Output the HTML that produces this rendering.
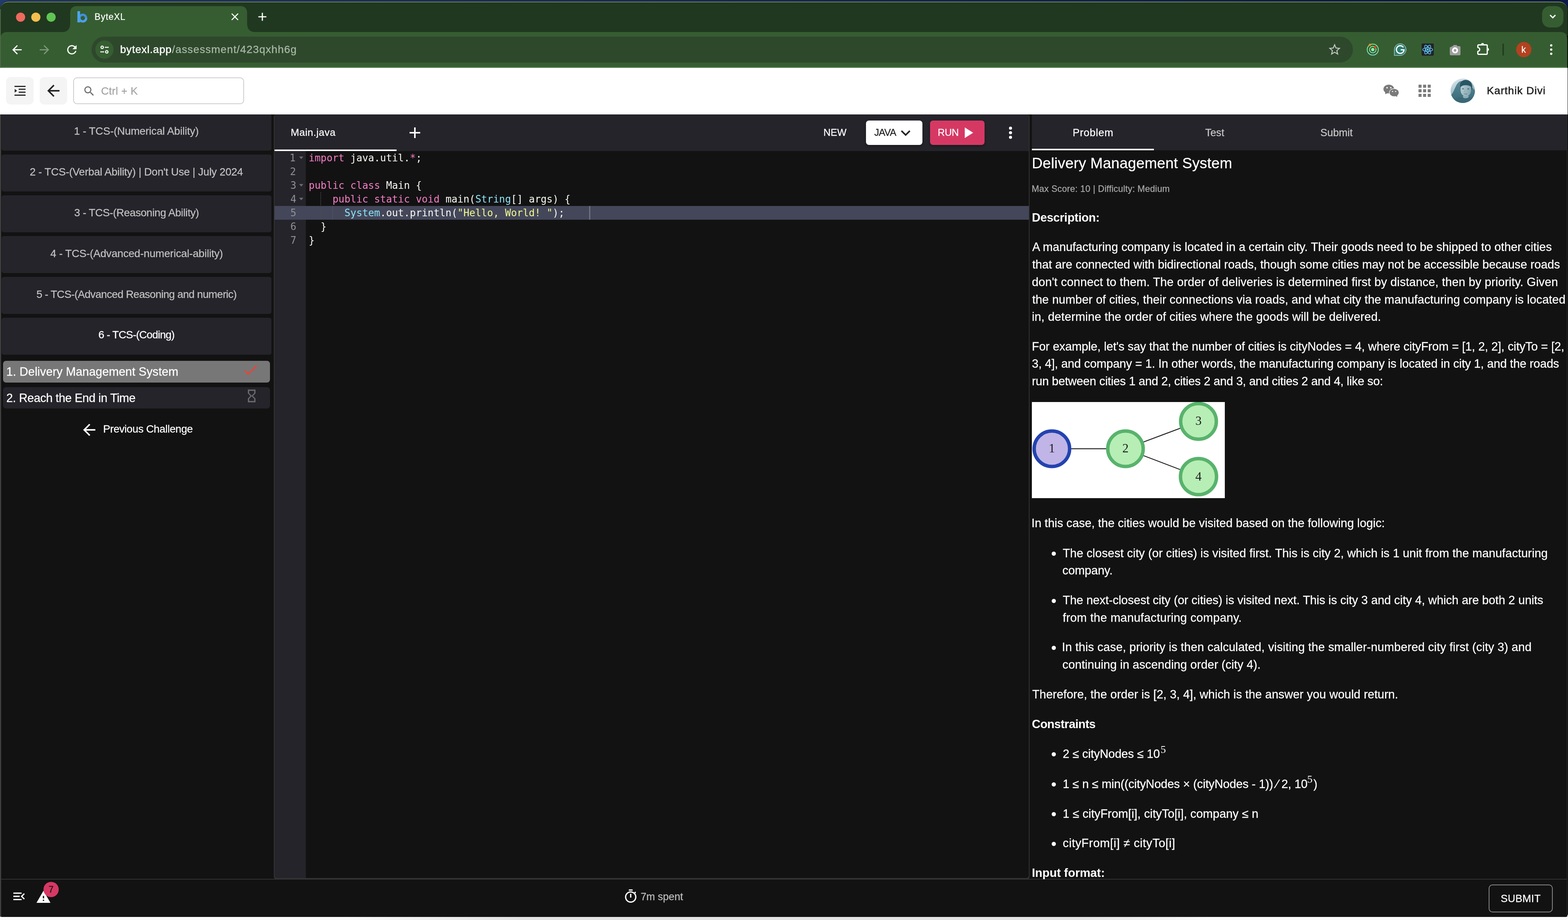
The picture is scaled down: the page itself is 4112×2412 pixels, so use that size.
<!DOCTYPE html>
<html lang="en"><head><meta charset="utf-8"><title>ByteXL</title>
<style>
html,body{margin:0;padding:0;}
body{width:4112px;height:2412px;overflow:hidden;position:relative;background:#111;font-family:'Liberation Sans', sans-serif;}
#root{position:absolute;left:0;top:0;width:4112px;height:2412px;overflow:hidden;will-change:transform;}
#root div,#root svg,#root span.t{position:absolute;display:block;}
span.t{white-space:pre;line-height:100px;-webkit-text-stroke:0.3px currentColor;}
@media (min-resolution:1.5dppx){body{width:2056px;height:1206px;}#root{transform:scale(.5);transform-origin:0 0;}}
</style></head><body><div id="root">
<div style="left:0px;top:0px;width:4112px;height:30px;background:linear-gradient(90deg,#223b6d 0%,#1a2f63 40%,#0d1a4a 100%);"></div>
<div style="left:0px;top:2398px;width:4112px;height:14px;background:linear-gradient(90deg,#fafafa 0%,#fafafa 22%,#e4e4e4 33%,#e4e4e4 69%,#fafafa 77%,#fafafa 100%);"></div>
<div style="left:0;top:3px;width:4111px;height:2401px;border-radius:22px 22px 6px 6px;background:#000;overflow:hidden;" id="win">
<div style="left:0px;top:0px;width:4111px;height:90px;background:#20381f;border-top:2px solid #7d9479;border-radius:22px 22px 0 0;box-sizing:border-box;margin-top:1px;"></div>
</div>
<svg style="left:0px;top:0px;" width="4112" height="180" viewBox="0 0 4112 180"><path d="M1 178 L1 102 Q1 84 19 84 L163 84 Q184 84 184 61 L184 34 Q184 16 202 16 L630 16 Q648 16 648 34 L648 61 Q648 84 669 84 L4092 84 Q4110 84 4110 102 L4110 178 Z" fill="#365d31"/></svg>
<div style="left:1px;top:175px;width:4109px;height:3px;background:linear-gradient(#3d6438,#6b8b67);"></div>
<div style="left:0px;top:24px;width:2px;height:154px;background:#4f684c;"></div>
<div style="left:42px;top:33px;width:24px;height:24px;background:#ee6a5e;border-radius:50%;"></div>
<div style="left:82px;top:33px;width:24px;height:24px;background:#f5bf4f;border-radius:50%;"></div>
<div style="left:122px;top:33px;width:24px;height:24px;background:#61c554;border-radius:50%;"></div>
<svg style="left:200px;top:28px;" width="32" height="32" viewBox="0 0 32 32"><circle cx="17.1" cy="19.4" r="8.800" fill="none" stroke="#3f8fdd" stroke-width="5.800"/><rect x="3" y="1.2" width="7" height="29.600" rx="0.800" fill="#4ea4ef"/><circle cx="17.1" cy="19.4" r="8.800" fill="none" stroke="#4a9fec" stroke-width="5.800" stroke-dasharray="44 100" stroke-dashoffset="16"/></svg>
<svg style="left:600.0px;top:28.0px;" width="32" height="32" viewBox="0 0 24 24"><path d="M19 6.41L17.59 5 12 10.59 6.41 5 5 6.41 10.59 12 5 17.59 6.41 19 12 13.41 17.59 19 19 17.59 13.41 12z" fill="#fff"/></svg>
<svg style="left:670.0px;top:26.0px;" width="36" height="36" viewBox="0 0 24 24"><path d="M19 13h-6v6h-2v-6H5v-2h6V5h2v6h6v2z" fill="#fff"/></svg>
<div style="left:4044px;top:16px;width:56px;height:56px;background:#365d31;border-radius:20px;"></div>
<svg style="left:4058px;top:30px;" width="28" height="28" viewBox="0 0 28 28"><path d="M7 9.5l7 7 7-7" stroke="#fff" stroke-width="3.2" fill="none"/></svg>
<svg style="left:25.5px;top:111.5px;" width="37" height="37" viewBox="0 0 24 24"><path d="M20 11H7.83l5.59-5.59L12 4l-8 8 8 8 1.41-1.41L7.83 13H20v-2z" fill="#fff"/></svg>
<svg style="left:97.5px;top:111.5px;" width="37" height="37" viewBox="0 0 24 24"><path d="M12 4l-1.41 1.41L16.17 11H4v2h12.17l-5.58 5.59L12 20l8-8z" fill="#7d977a"/></svg>
<svg style="left:169.5px;top:111.5px;" width="37" height="37" viewBox="0 0 24 24"><path d="M17.65 6.35C16.2 4.9 14.21 4 12 4c-4.42 0-7.99 3.58-7.99 8s3.57 8 7.99 8c3.73 0 6.84-2.55 7.73-6h-2.08c-.82 2.33-3.04 4-5.65 4-3.31 0-6-2.69-6-6s2.69-6 6-6c1.66 0 3.14.69 4.22 1.78L13 11h7V4l-2.35 2.35z" fill="#fff"/></svg>
<div style="left:240px;top:96px;width:3308px;height:68px;background:#2e482c;border-radius:34px;"></div>
<div style="left:250px;top:106px;width:48px;height:48px;background:#365d31;border-radius:50%;"></div>
<svg style="left:258px;top:114px;" width="32" height="32" viewBox="0 0 32 32"><g fill="none" stroke="#fff" stroke-width="2.6"><circle cx="10" cy="10" r="3.2"/><path d="M17 10h10M5 22h10"/><circle cx="22" cy="22" r="3.2"/></g></svg>
<svg style="left:3481.0px;top:111.0px;" width="38" height="38" viewBox="0 0 24 24"><path d="M22 9.24l-7.19-.62L12 2 9.19 8.63 2 9.24l5.46 4.73L5.82 21 12 17.27 18.18 21l-1.63-7.03L22 9.24zM12 15.4l-3.76 2.27 1-4.28-3.32-2.88 4.38-.38L12 6.1l1.71 4.04 4.38.38-3.32 2.88 1 4.28L12 15.4z" fill="#c3c6c3"/></svg>
<svg style="left:3584px;top:114px;" width="32" height="32" viewBox="0 0 32 32"><defs><linearGradient id="g1" x1="0" y1="0" x2="0" y2="1"><stop offset="0" stop-color="#8cf28c"/><stop offset="1" stop-color="#7fe9d3"/></linearGradient></defs><circle cx="16" cy="16" r="14.6" fill="none" stroke="url(#g1)" stroke-width="2"/><circle cx="16" cy="16" r="8.6" fill="none" stroke="url(#g1)" stroke-width="2"/><circle cx="16" cy="16" r="4.4" fill="#8df0a4"/><circle cx="8.6" cy="3.4" r="3" fill="#ee8a3a"/><circle cx="22.6" cy="10" r="3" fill="#e5492d"/></svg>
<svg style="left:3656px;top:114px;" width="32" height="32" viewBox="0 0 32 32"><path d="M16 .5A15.5 15.5 0 1 1 16 31.5H.5V16A15.5 15.5 0 0 1 16 .5z" fill="#2f7f6f" stroke="#e8f0ec" stroke-width="1"/><path d="M24.2 10.2A10 10 0 1 0 26 16.6H17.4" fill="none" stroke="#fff" stroke-width="3.2"/></svg>
<svg style="left:3728px;top:114px;" width="32" height="32" viewBox="0 0 32 32"><rect width="32" height="32" rx="3" fill="#20232a"/><g fill="none" stroke="#61c7f5" stroke-width="1.7"><ellipse cx="16" cy="16" rx="13" ry="5"/><ellipse cx="16" cy="16" rx="13" ry="5" transform="rotate(60 16 16)"/><ellipse cx="16" cy="16" rx="13" ry="5" transform="rotate(120 16 16)"/></g><circle cx="16" cy="16" r="2.7" fill="#61c7f5"/></svg>
<svg style="left:3801px;top:116.5px;" width="30" height="28" viewBox="0 0 30 28"><path d="M4 6h2V4h3l2-3h8l2 3h5a3 3 0 0 1 3 3v18a3 3 0 0 1-3 3H4a3 3 0 0 1-3-3V9a3 3 0 0 1 3-3z" fill="#9e9f9e"/><circle cx="14.800" cy="15" r="7.900" fill="#fff"/><circle cx="14.800" cy="15" r="3.500" fill="#9e9f9e"/></svg>
<svg style="left:3872px;top:110px;" width="36" height="36" viewBox="0 0 36 36"><path d="M3.500 14.600V9.700a2 2 0 0 1 2-2H26.200a2 2 0 0 1 2 2V30.300a2 2 0 0 1-2 2H5.500a2 2 0 0 1-2-2V24.600a5 5 0 0 0 0-10z" fill="none" stroke="#fff" stroke-width="3.200" stroke-linejoin="round"/><path d="M11.700 7a4.200 4.200 0 0 1 8.400 0zM28.600 15.400a4.200 4.200 0 0 1 0 8.400z" fill="#fff"/></svg>
<div style="left:3940px;top:114px;width:4px;height:32px;background:#223d21;border-radius:2px;"></div>
<div style="left:3976px;top:110px;width:40px;height:40px;background:#b3421f;border-radius:50%;"></div>
<div style="left:4065px;top:116px;width:6px;height:6px;background:#fff;border-radius:50%;"></div>
<div style="left:4065px;top:127px;width:6px;height:6px;background:#fff;border-radius:50%;"></div>
<div style="left:4065px;top:138px;width:6px;height:6px;background:#fff;border-radius:50%;"></div>
<div style="left:0px;top:178px;width:4111px;height:122px;background:#fff;"></div>
<div style="left:0px;top:300px;width:4111px;height:2104px;background:#121212;border-radius:0 0 6px 6px;"></div>
<div style="left:0px;top:300px;width:3px;height:2104px;background:#3f3f3f;border-radius:0 0 0 6px;"></div>
<div style="left:4109px;top:300px;width:1px;height:2104px;background:#2e2e2e;"></div>
<div style="left:16px;top:202px;width:72px;height:72px;background:#f4f4f4;border-radius:12px;"></div>
<div style="left:104px;top:202px;width:72px;height:72px;background:#f4f4f4;border-radius:12px;"></div>
<svg style="left:37.5px;top:225px;" width="29" height="26" viewBox="0 0 29 26"><path d="M0 0h29v3H0zM11 7.600h18v3H11zM11 15.200h18v3H11zM0 23h29v3H0zM0.500 8.200l6.300 4.800-6.300 4.800z" fill="#222"/></svg>
<svg style="left:116.0px;top:214.0px;" width="48" height="48" viewBox="0 0 24 24"><path d="M20 11H7.83l5.59-5.59L12 4l-8 8 8 8 1.41-1.41L7.83 13H20v-2z" fill="#222"/></svg>
<div style="left:192px;top:203px;width:448px;height:70px;background:#fff;border:2px solid #ccc;border-radius:10px;box-sizing:border-box;"></div>
<svg style="left:217.0px;top:222.0px;" width="34" height="34" viewBox="0 0 24 24"><path d="M15.5 14h-.79l-.28-.27C15.41 12.59 16 11.11 16 9.5 16 5.91 13.09 3 9.5 3S3 5.91 3 9.5 5.91 16 9.5 16c1.61 0 3.09-.59 4.23-1.57l.27.28v.79l5 4.99L20.49 19l-4.99-5zm-6 0C7.01 14 5 11.99 5 9.5S7.01 5 9.5 5 14 7.01 14 9.5 11.99 14 9.5 14z" fill="#6c6c6c"/></svg>
<svg style="left:3628px;top:222px;" width="41" height="33" viewBox="0 0 41 33"><g fill="#7a7a7a"><ellipse cx="14" cy="11.400" rx="14" ry="11.400"/><path d="M4 18.500L5.200 25.200 12 21z"/></g><ellipse cx="28.100" cy="20.700" rx="13.300" ry="11" fill="#fff"/><g fill="#7a7a7a"><ellipse cx="28.100" cy="20.700" rx="12" ry="9.800"/><path d="M31 29.500L36 32 36.500 26z"/></g><g fill="#fff"><circle cx="9.500" cy="8" r="1.900"/><circle cx="19.300" cy="8" r="1.900"/><circle cx="23.900" cy="17.800" r="1.600"/><circle cx="32" cy="17.800" r="1.600"/></g></svg>
<div style="left:3720px;top:222px;width:8px;height:8px;background:#7c7c7c;"></div>
<div style="left:3732px;top:222px;width:8px;height:8px;background:#7c7c7c;"></div>
<div style="left:3744px;top:222px;width:8px;height:8px;background:#7c7c7c;"></div>
<div style="left:3720px;top:234px;width:8px;height:8px;background:#7c7c7c;"></div>
<div style="left:3732px;top:234px;width:8px;height:8px;background:#7c7c7c;"></div>
<div style="left:3744px;top:234px;width:8px;height:8px;background:#7c7c7c;"></div>
<div style="left:3720px;top:246px;width:8px;height:8px;background:#7c7c7c;"></div>
<div style="left:3732px;top:246px;width:8px;height:8px;background:#7c7c7c;"></div>
<div style="left:3744px;top:246px;width:8px;height:8px;background:#7c7c7c;"></div>
<svg style="left:3804px;top:206px;" width="64" height="64" viewBox="0 0 64 64"><defs><clipPath id="av"><circle cx="32" cy="32" r="32"/></clipPath><linearGradient id="avg" x1="0" y1="0" x2="0.400" y2="1"><stop offset="0" stop-color="#e6eff3"/><stop offset="0.500" stop-color="#a9c3cc"/><stop offset="1" stop-color="#6f97a4"/></linearGradient><linearGradient id="avb" x1="0" y1="0" x2="0" y2="1"><stop offset="0" stop-color="#5b8997"/><stop offset="1" stop-color="#356775"/></linearGradient><linearGradient id="avf" x1="0" y1="0" x2="1" y2="0.300"><stop offset="0" stop-color="#b9cfd6"/><stop offset="1" stop-color="#88a8b2"/></linearGradient></defs><g clip-path="url(#av)"><rect width="64" height="64" fill="url(#avg)"/><path d="M0 44C6 40 10 28 14 20 18 11 23 7 29 6.500L57 24 66 33V66H0z" fill="url(#avb)"/><path d="M25 21C24 12 28 5 38 3.600 48 3 55 9 56.500 17 57.500 22 57 27 55.500 31L53 21 40 17 28 21 26.500 30z" fill="#2a5564"/><path d="M26.500 22C30 18 36 17 41 17.500 46 17.500 50 19 53.500 21.500 54.500 28 54 34 52 39 49 44 44 47 39.500 47 35 46.500 30 43 27.500 37 26 32 26 27 26.500 22z" fill="url(#avf)"/><path d="M33 45C36 47 43 47 47 44L48 51 40 55 32 51z" fill="#8eadb7"/><path d="M2 64C5 55 14 51 24 49.500L32 48.500C35 53 44 53 48 48L56 50C62 52 66 56 68 64z" fill="#3a6876"/><g fill="#2f5866"><ellipse cx="32.500" cy="26.800" rx="2.600" ry="1.100"/><ellipse cx="46.500" cy="27.200" rx="2.600" ry="1.100"/><path d="M34.500 39.200q4.500 1.600 9 0.200l-.3 1q-4.200 1.200-8.400-.100z"/></g><path d="M38 28.500l-1.500 6.500 3.500.8" stroke="#7f9fa9" stroke-width="0.900" fill="none"/></g></svg>
<div style="left:4px;top:298px;width:708px;height:97px;background:#24242a;border-radius:6px;"></div>
<div style="left:4px;top:405px;width:708px;height:97px;background:#24242a;border-radius:6px;"></div>
<div style="left:4px;top:512px;width:708px;height:97px;background:#24242a;border-radius:6px;"></div>
<div style="left:4px;top:619px;width:708px;height:97px;background:#24242a;border-radius:6px;"></div>
<div style="left:4px;top:726px;width:708px;height:97px;background:#24242a;border-radius:6px;"></div>
<div style="left:4px;top:833px;width:708px;height:97px;background:#24242a;border-radius:6px;"></div>
<div style="left:4px;top:296px;width:708px;height:4px;background:#fff;"></div>
<div style="left:8px;top:946px;width:700px;height:57px;background:#777777;border-radius:8px;"></div>
<svg style="left:634.0px;top:947.0px;" width="46" height="46" viewBox="0 0 24 24"><path d="M9 16.17L4.83 12l-1.42 1.41L9 19 21 7l-1.41-1.41z" fill="#e2473b"/></svg>
<div style="left:8px;top:1015px;width:700px;height:56px;background:#24242a;border-radius:8px;"></div>
<svg style="left:640.0px;top:1018.0px;" width="40" height="40" viewBox="0 0 24 24"><path d="M6 2v6h.01L6 8.01 10 12l-4 4 .01.01H6V22h12v-5.99h-.01L18 16l-4-4 4-3.99-.01-.01H18V2H6zm10 14.5V20H8v-3.500l4-4 4 4zm-4-5l-4-4V4h8v3.500l-4 4z" fill="#6a6a6e"/></svg>
<svg style="left:210.0px;top:1103.0px;" width="48" height="48" viewBox="0 0 24 24"><path d="M20 11H7.83l5.59-5.59L12 4l-8 8 8 8 1.41-1.41L7.83 13H20v-2z" fill="#fff"/></svg>
<div style="left:718px;top:300px;width:1982px;height:2006px;background:#333;border-radius:5px 5px 8px 8px;"></div>
<div style="left:720px;top:300px;width:1978px;height:2002px;background:#121212;border-radius:4px 4px 7px 7px;"></div>
<div style="left:720px;top:300px;width:1978px;height:96px;background:#24242a;border-radius:4px 4px 0 0;"></div>
<div style="left:720px;top:392px;width:320px;height:4px;background:#fff;"></div>
<div style="left:1074px;top:346px;width:28px;height:4px;background:#fff;"></div>
<div style="left:1086px;top:334px;width:4px;height:28px;background:#fff;"></div>
<div style="left:2271px;top:316px;width:148px;height:64px;background:#fff;border-radius:8px;box-shadow:0 3px 6px rgba(0,0,0,.35);"></div>
<svg style="left:2361px;top:334px;" width="28" height="28" viewBox="0 0 28 28"><path d="M3 9l11 11 11-11" stroke="#222" stroke-width="4" fill="none"/></svg>
<div style="left:2439px;top:316px;width:143px;height:64px;background:#d63864;border-radius:8px;box-shadow:0 3px 6px rgba(0,0,0,.35);"></div>
<svg style="left:2529px;top:334px;" width="24" height="28" viewBox="0 0 24 28"><path d="M1 0v28l22-14z" fill="#fff"/></svg>
<div style="left:2646px;top:332px;width:8px;height:8px;background:#fff;border-radius:50%;"></div>
<div style="left:2646px;top:344px;width:8px;height:8px;background:#fff;border-radius:50%;"></div>
<div style="left:2646px;top:356px;width:8px;height:8px;background:#fff;border-radius:50%;"></div>
<div style="left:720px;top:396px;width:82px;height:1906px;background:#24242a;border-radius:0 0 0 7px;"></div>
<div style="left:720px;top:540px;width:1978px;height:36px;background:#44475a;"></div>
<svg style="left:784px;top:410px;" width="12" height="8" viewBox="0 0 12 8"><path d="M0.500 0.500h11l-5.500 6.500z" fill="#6d6e73"/></svg>
<svg style="left:784px;top:482px;" width="12" height="8" viewBox="0 0 12 8"><path d="M0.500 0.500h11l-5.500 6.500z" fill="#6d6e73"/></svg>
<svg style="left:784px;top:518px;" width="12" height="8" viewBox="0 0 12 8"><path d="M0.500 0.500h11l-5.500 6.500z" fill="#6d6e73"/></svg>
<div style="left:840px;top:504px;width:2px;height:72px;background:repeating-linear-gradient(#4a4a4a 0 2px,transparent 2px 4px);"></div>
<div style="left:871px;top:540px;width:2px;height:36px;background:repeating-linear-gradient(#55586a 0 2px,transparent 2px 4px);"></div>
<div style="left:1544.5px;top:540px;width:3px;height:36px;background:#70737f;"></div>
<div style="left:2706px;top:300px;width:1403px;height:94px;background:#24242a;"></div>
<div style="left:2706px;top:390px;width:320px;height:4px;background:#fff;"></div>
<div style="left:2758px;top:1446.0px;width:11px;height:11px;background:#fff;border-radius:50%;"></div>
<div style="left:2758px;top:1569.5px;width:11px;height:11px;background:#fff;border-radius:50%;"></div>
<div style="left:2758px;top:1692.5px;width:11px;height:11px;background:#fff;border-radius:50%;"></div>
<div style="left:2758px;top:1972.0px;width:11px;height:11px;background:#fff;border-radius:50%;"></div>
<div style="left:2758px;top:2051.0px;width:11px;height:11px;background:#fff;border-radius:50%;"></div>
<div style="left:2758px;top:2129.0px;width:11px;height:11px;background:#fff;border-radius:50%;"></div>
<div style="left:2758px;top:2206.5px;width:11px;height:11px;background:#fff;border-radius:50%;"></div>
<svg style="left:2706px;top:1054px;" width="506" height="252" viewBox="0 0 506 252"><rect width="506" height="252" fill="#fff"/>
<g stroke="#242424" stroke-width="2.400"><path d="M52 122.500H245M245.500 122.500L437 50.800M245.500 122.500L437 195.500"/></g>
<circle cx="52.500" cy="122.500" r="46.500" fill="#c0b5e6" stroke="#2343b0" stroke-width="9"/>
<circle cx="245.500" cy="122.500" r="46.500" fill="#b7eeb5" stroke="#58b36c" stroke-width="9"/>
<circle cx="437" cy="50.800" r="46.800" fill="#b7eeb5" stroke="#58b36c" stroke-width="9"/>
<circle cx="437" cy="195.500" r="47.300" fill="#b7eeb5" stroke="#58b36c" stroke-width="9"/>
<g font-family="'Liberation Serif', serif" font-size="33" fill="#1c1c1c" text-anchor="middle"><text x="52.500" y="132">1</text><text x="245.500" y="132">2</text><text x="437" y="60.300">3</text><text x="437" y="205.600">4</text></g></svg>
<div style="left:3px;top:2304px;width:4106px;height:2px;background:#333;"></div>
<div style="left:3px;top:2306px;width:4106px;height:98px;background:#121212;border-radius:0 0 4px 4px;"></div>
<svg style="left:30.0px;top:2330.0px;" width="40" height="40" viewBox="0 0 24 24"><path d="M3 18h13v-2H3v2zm0-5h10v-2H3v2zm0-7v2h13V6H3zm18 9.59L17.42 12 21 8.410 19.590 7l-5 5 5 5L21 15.590z" fill="#fff"/></svg>
<svg style="left:94.0px;top:2332.0px;" width="40" height="40" viewBox="0 0 24 24"><path d="M1 21h22L12 2 1 21zm12-3h-2v-2h2v2zm0-4h-2v-4h2v4z" fill="#fff"/></svg>
<div style="left:114px;top:2312px;width:40px;height:40px;background:#d63864;border-radius:50%;"></div>
<svg style="left:1634.0px;top:2330.0px;" width="40" height="40" viewBox="0 0 24 24"><path d="M15 1H9v2h6V1zm-4 13h2V8h-2v6zm8.030-6.610l1.420-1.420c-.43-.51-.9-.99-1.410-1.410l-1.420 1.420C16.070 4.740 14.120 4 12 4c-4.970 0-9 4.030-9 9s4.020 9 9 9 9-4.030 9-9c0-2.120-.74-4.070-1.970-5.610zM12 20c-3.870 0-7-3.130-7-7s3.130-7 7-7 7 3.130 7 7-3.130 7-7 7z" fill="#fff"/></svg>
<div style="left:3904px;top:2319px;width:168px;height:73px;background:transparent;border:2px solid #8a8a8a;border-radius:10px;box-sizing:border-box;"></div>
<span class="t" style="left:248.00px;top:-6.00px;font-size:23.2px;color:#fff;letter-spacing:1.100px;">ByteXL</span>
<span class="t" style="left:315.00px;top:80.40px;font-size:28px;color:#fff;letter-spacing:0.778px;-webkit-text-stroke:0.5px #fff;">bytexl.app</span>
<span class="t" style="left:451.00px;top:80.40px;font-size:28px;color:#a9b8a7;letter-spacing:1.150px;-webkit-text-stroke:0.4px #a9b8a7;">/assessment/423qxhh6g</span>
<span class="t" style="left:3989.50px;top:80.40px;font-size:24px;color:#fff;">k</span>
<span class="t" style="left:265.00px;top:189.40px;font-size:28px;color:#a3a3a3;letter-spacing:0.286px;">Ctrl + K</span>
<span class="t" style="left:3899.00px;top:188.40px;font-size:28px;color:#222;letter-spacing:1.091px;-webkit-text-stroke:0.7px #222;">Karthik Divi</span>
<span class="t" style="left:194.00px;top:293.90px;font-size:28.08px;color:#c2c2c2;letter-spacing:-0.173px;">1 - TCS-(Numerical Ability)</span>
<span class="t" style="left:78.00px;top:400.80px;font-size:28.08px;color:#c2c2c2;letter-spacing:-0.298px;">2 - TCS-(Verbal Ability) | Don't Use | July 2024</span>
<span class="t" style="left:194.50px;top:507.70px;font-size:28.08px;color:#c2c2c2;letter-spacing:-0.462px;">3 - TCS-(Reasoning Ability)</span>
<span class="t" style="left:132.00px;top:614.60px;font-size:28.08px;color:#c2c2c2;letter-spacing:-0.243px;">4 - TCS-(Advanced-numerical-ability)</span>
<span class="t" style="left:95.50px;top:721.50px;font-size:28.08px;color:#c2c2c2;letter-spacing:-0.718px;">5 - TCS-(Advanced Reasoning and numeric)</span>
<span class="t" style="left:258.00px;top:828.40px;font-size:28.08px;color:#fff;letter-spacing:-0.867px;">6 - TCS-(Coding)</span>
<span class="t" style="left:16.50px;top:925.40px;font-size:31.2px;color:#fff;letter-spacing:0.018px;">1. Delivery Management System</span>
<span class="t" style="left:16.50px;top:994.40px;font-size:31.2px;color:#fff;letter-spacing:-0.478px;">2. Reach the End in Time</span>
<span class="t" style="left:270.50px;top:1074.90px;font-size:28.08px;color:#fff;letter-spacing:-0.471px;">Previous Challenge</span>
<span class="t" style="left:762.50px;top:297.40px;font-size:26.32px;color:#fff;letter-spacing:0.562px;">Main.java</span>
<span class="t" style="left:2159.50px;top:297.40px;font-size:25.84px;color:#fff;">NEW</span>
<span class="t" style="left:2292.50px;top:297.40px;font-size:25.84px;color:#222;letter-spacing:-0.833px;">JAVA</span>
<span class="t" style="left:2459.00px;top:297.40px;font-size:25.84px;color:#fff;letter-spacing:-0.250px;">RUN</span>
<span class="t" style="left:759.50px;top:364.00px;font-size:26px;color:#909194;font-family:'DejaVu Sans Mono', 'Liberation Mono', monospace;-webkit-text-stroke:0;">1</span>
<span class="t" style="left:809.60px;top:364.00px;font-size:26px;color:#f67dc6;font-family:'DejaVu Sans Mono', 'Liberation Mono', monospace;-webkit-text-stroke:0;letter-spacing:-0.056px;">import</span>
<span class="t" style="left:918.80px;top:364.00px;font-size:26px;color:#f8f8f2;font-family:'DejaVu Sans Mono', 'Liberation Mono', monospace;-webkit-text-stroke:0;letter-spacing:-0.056px;">java.util.</span>
<span class="t" style="left:1074.80px;top:364.00px;font-size:26px;color:#f67dc6;font-family:'DejaVu Sans Mono', 'Liberation Mono', monospace;-webkit-text-stroke:0;letter-spacing:-0.056px;">*</span>
<span class="t" style="left:1090.40px;top:364.00px;font-size:26px;color:#f8f8f2;font-family:'DejaVu Sans Mono', 'Liberation Mono', monospace;-webkit-text-stroke:0;letter-spacing:-0.056px;">;</span>
<span class="t" style="left:760.50px;top:400.00px;font-size:26px;color:#909194;font-family:'DejaVu Sans Mono', 'Liberation Mono', monospace;-webkit-text-stroke:0;">2</span>
<span class="t" style="left:761.50px;top:436.00px;font-size:26px;color:#909194;font-family:'DejaVu Sans Mono', 'Liberation Mono', monospace;-webkit-text-stroke:0;">3</span>
<span class="t" style="left:809.60px;top:436.00px;font-size:26px;color:#f67dc6;font-family:'DejaVu Sans Mono', 'Liberation Mono', monospace;-webkit-text-stroke:0;letter-spacing:-0.056px;">public</span>
<span class="t" style="left:918.80px;top:436.00px;font-size:26px;color:#f67dc6;font-family:'DejaVu Sans Mono', 'Liberation Mono', monospace;-webkit-text-stroke:0;letter-spacing:-0.056px;">class</span>
<span class="t" style="left:1012.40px;top:436.00px;font-size:26px;color:#f8f8f2;font-family:'DejaVu Sans Mono', 'Liberation Mono', monospace;-webkit-text-stroke:0;letter-spacing:-0.056px;">Main {</span>
<span class="t" style="left:761.50px;top:472.00px;font-size:26px;color:#909194;font-family:'DejaVu Sans Mono', 'Liberation Mono', monospace;-webkit-text-stroke:0;">4</span>
<span class="t" style="left:872.00px;top:472.00px;font-size:26px;color:#f67dc6;font-family:'DejaVu Sans Mono', 'Liberation Mono', monospace;-webkit-text-stroke:0;letter-spacing:-0.056px;">public</span>
<span class="t" style="left:981.20px;top:472.00px;font-size:26px;color:#f67dc6;font-family:'DejaVu Sans Mono', 'Liberation Mono', monospace;-webkit-text-stroke:0;letter-spacing:-0.056px;">static</span>
<span class="t" style="left:1090.40px;top:472.00px;font-size:26px;color:#f67dc6;font-family:'DejaVu Sans Mono', 'Liberation Mono', monospace;-webkit-text-stroke:0;letter-spacing:-0.056px;">void</span>
<span class="t" style="left:1168.40px;top:472.00px;font-size:26px;color:#f8f8f2;font-family:'DejaVu Sans Mono', 'Liberation Mono', monospace;-webkit-text-stroke:0;letter-spacing:-0.056px;">main(</span>
<span class="t" style="left:1246.40px;top:472.00px;font-size:26px;color:#8be3f7;font-family:'DejaVu Sans Mono', 'Liberation Mono', monospace;-webkit-text-stroke:0;letter-spacing:-0.056px;">String</span>
<span class="t" style="left:1340.00px;top:472.00px;font-size:26px;color:#f8f8f2;font-family:'DejaVu Sans Mono', 'Liberation Mono', monospace;-webkit-text-stroke:0;letter-spacing:-0.056px;">[] args) {</span>
<span class="t" style="left:761.50px;top:508.00px;font-size:26px;color:#909194;font-family:'DejaVu Sans Mono', 'Liberation Mono', monospace;-webkit-text-stroke:0;">5</span>
<span class="t" style="left:903.20px;top:508.00px;font-size:26px;color:#8be3f7;font-family:'DejaVu Sans Mono', 'Liberation Mono', monospace;-webkit-text-stroke:0;letter-spacing:-0.056px;">System</span>
<span class="t" style="left:996.80px;top:508.00px;font-size:26px;color:#f8f8f2;font-family:'DejaVu Sans Mono', 'Liberation Mono', monospace;-webkit-text-stroke:0;letter-spacing:-0.056px;">.out.println(</span>
<span class="t" style="left:1199.60px;top:508.00px;font-size:26px;color:#f1f98d;font-family:'DejaVu Sans Mono', 'Liberation Mono', monospace;-webkit-text-stroke:0;letter-spacing:-0.056px;">"Hello, World! "</span>
<span class="t" style="left:1449.20px;top:508.00px;font-size:26px;color:#f8f8f2;font-family:'DejaVu Sans Mono', 'Liberation Mono', monospace;-webkit-text-stroke:0;letter-spacing:-0.056px;">);</span>
<span class="t" style="left:761.50px;top:544.00px;font-size:26px;color:#909194;font-family:'DejaVu Sans Mono', 'Liberation Mono', monospace;-webkit-text-stroke:0;">6</span>
<span class="t" style="left:840.80px;top:544.00px;font-size:26px;color:#f8f8f2;font-family:'DejaVu Sans Mono', 'Liberation Mono', monospace;-webkit-text-stroke:0;letter-spacing:-0.056px;">}</span>
<span class="t" style="left:761.50px;top:580.00px;font-size:26px;color:#909194;font-family:'DejaVu Sans Mono', 'Liberation Mono', monospace;-webkit-text-stroke:0;">7</span>
<span class="t" style="left:809.60px;top:580.00px;font-size:26px;color:#f8f8f2;font-family:'DejaVu Sans Mono', 'Liberation Mono', monospace;-webkit-text-stroke:0;letter-spacing:-0.056px;">}</span>
<span class="t" style="left:2813.00px;top:297.90px;font-size:27.3px;color:#fff;letter-spacing:0.750px;">Problem</span>
<span class="t" style="left:3160.50px;top:297.90px;font-size:27.3px;color:#c8c8c8;">Test</span>
<span class="t" style="left:3462.50px;top:297.90px;font-size:27.3px;color:#c8c8c8;">Submit</span>
<span class="t" style="left:2706.00px;top:378.40px;font-size:39.0px;color:#fff;letter-spacing:0.200px;">Delivery Management System</span>
<span class="t" style="left:2705.50px;top:444.70px;font-size:23.4px;color:#aaa;letter-spacing:0.242px;">Max Score: 10 | Difficulty: Medium</span>
<span class="t" style="left:2706.00px;top:520.60px;font-size:31.2px;color:#fff;font-weight:700;-webkit-text-stroke:0;letter-spacing:-0.364px;">Description:</span>
<span class="t" style="left:2707.00px;top:598.40px;font-size:31.2px;color:#fff;letter-spacing:-0.025px;">A manufacturing company is located in a certain city. Their goods need to be shipped to other cities</span>
<span class="t" style="left:2707.00px;top:644.20px;font-size:31.2px;color:#fff;letter-spacing:-0.082px;">that are connected with bidirectional roads, though some cities may not be accessible because roads</span>
<span class="t" style="left:2706.00px;top:689.90px;font-size:31.2px;color:#fff;letter-spacing:0.157px;">don't connect to them. The order of deliveries is determined first by distance, then by priority. Given</span>
<span class="t" style="left:2707.00px;top:735.70px;font-size:31.2px;color:#fff;letter-spacing:0.045px;">the number of cities, their connections via roads, and what city the manufacturing company is located</span>
<span class="t" style="left:2706.00px;top:781.40px;font-size:31.2px;color:#fff;letter-spacing:0.134px;">in, determine the order of cities where the goods will be delivered.</span>
<span class="t" style="left:2706.00px;top:858.70px;font-size:31.2px;color:#fff;letter-spacing:-0.137px;">For example, let's say that the number of cities is cityNodes = 4, where cityFrom = [1, 2, 2], cityTo = [2,</span>
<span class="t" style="left:2706.00px;top:904.40px;font-size:31.2px;color:#fff;letter-spacing:-0.155px;">3, 4], and company = 1. In other words, the manufacturing company is located in city 1, and the roads</span>
<span class="t" style="left:2706.00px;top:950.20px;font-size:31.2px;color:#fff;letter-spacing:-0.289px;">run between cities 1 and 2, cities 2 and 3, and cities 2 and 4, like so:</span>
<span class="t" style="left:2705.00px;top:1322.40px;font-size:31.2px;color:#fff;letter-spacing:-0.036px;">In this case, the cities would be visited based on the following logic:</span>
<span class="t" style="left:2787.00px;top:1400.60px;font-size:31.2px;color:#fff;letter-spacing:0.020px;">The closest city (or cities) is visited first. This is city 2, which is 1 unit from the manufacturing</span>
<span class="t" style="left:2786.00px;top:1446.40px;font-size:31.2px;color:#fff;letter-spacing:-0.143px;">company.</span>
<span class="t" style="left:2787.00px;top:1524.20px;font-size:31.2px;color:#fff;letter-spacing:-0.081px;">The next-closest city (or cities) is visited next. This is city 3 and city 4, which are both 2 units</span>
<span class="t" style="left:2787.00px;top:1569.90px;font-size:31.2px;color:#fff;letter-spacing:0.233px;">from the manufacturing company.</span>
<span class="t" style="left:2785.00px;top:1647.40px;font-size:31.2px;color:#fff;letter-spacing:0.116px;">In this case, priority is then calculated, visiting the smaller-numbered city first (city 3) and</span>
<span class="t" style="left:2786.00px;top:1693.10px;font-size:31.2px;color:#fff;letter-spacing:0.039px;">continuing in ascending order (city 4).</span>
<span class="t" style="left:2707.00px;top:1770.90px;font-size:31.2px;color:#fff;letter-spacing:0.014px;">Therefore, the order is [2, 3, 4], which is the answer you would return.</span>
<span class="t" style="left:2706.00px;top:1848.70px;font-size:31.2px;color:#fff;font-weight:700;-webkit-text-stroke:0;letter-spacing:-0.600px;">Constraints</span>
<span class="t" style="left:2787.00px;top:1926.70px;font-size:31.2px;color:#fff;letter-spacing:-0.176px;">2 ≤ cityNodes ≤ 10</span>
<span class="t" style="left:3043.50px;top:1915.40px;font-size:28px;color:#fff;font-family:'Liberation Serif', serif;-webkit-text-stroke:0;">5</span>
<span class="t" style="left:2787.00px;top:2005.90px;font-size:31.2px;color:#fff;letter-spacing:-0.208px;">1 ≤ n ≤ min((cityNodes × (cityNodes - 1)) ⁄ 2, 10</span>
<span class="t" style="left:3428.00px;top:1992.90px;font-size:28px;color:#fff;font-family:'Liberation Serif', serif;-webkit-text-stroke:0;">5</span>
<span class="t" style="left:3444.50px;top:2005.90px;font-size:31.2px;color:#fff;">)</span>
<span class="t" style="left:2787.00px;top:2083.70px;font-size:31.2px;color:#fff;letter-spacing:0.013px;">1 ≤ cityFrom[i], cityTo[i], company ≤ n</span>
<span class="t" style="left:2787.00px;top:2161.40px;font-size:31.2px;color:#fff;letter-spacing:0.568px;">cityFrom[i] ≠ cityTo[i]</span>
<span class="t" style="left:2706.00px;top:2238.70px;font-size:31.2px;color:#fff;font-weight:700;-webkit-text-stroke:0;letter-spacing:-0.083px;height:66px;overflow:hidden;">Input format:</span>
<span class="t" style="left:127.50px;top:2282.40px;font-size:23.4px;color:#111;">7</span>
<span class="t" style="left:1680.00px;top:2301.40px;font-size:27.3px;color:#bdbdbd;letter-spacing:-0.143px;">7m spent</span>
<span class="t" style="left:3935.50px;top:2305.90px;font-size:27.3px;color:#fff;letter-spacing:0.300px;">SUBMIT</span>
</div></body></html>
